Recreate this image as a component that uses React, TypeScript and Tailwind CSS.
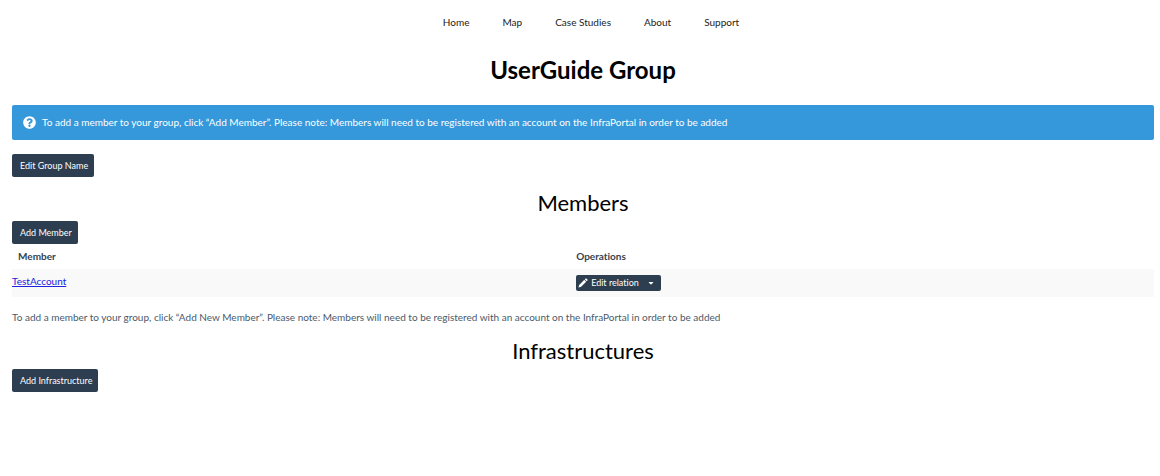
import type { ReactNode } from "react";
import { FaQuestionCircle, FaCaretDown } from "react-icons/fa";

const links = ["Home", "Map", "Case Studies", "About", "Support"];

function ActionButton({ children }: { children: ReactNode }) {
  return (
    <button type="button" className="block h-[23px] rounded-xs bg-[#2c3e50] pr-[6px] pl-2 text-[9px] leading-4 text-white">
      {children}
    </button>
  );
}

function PencilIcon() {
  return (
    <svg viewBox="0 0 10 10" className="size-[10px]" fill="currentColor" aria-hidden="true">
      <path d="M0.4 9.6 L1.2 6.9 L6.3 1.8 L8.2 3.7 L3.1 8.8 Z M6.8 1.3 L7.7 0.4 Q8 0.1 8.3 0.4 L9.6 1.7 Q9.9 2 9.6 2.3 L8.7 3.2 Z" />
    </svg>
  );
}

export default function App() {
  return (
    <div className="bg-white font-['Lato',sans-serif] text-[10px] text-[#4a5a6a] [font-variant-ligatures:none]">
      <nav className="flex justify-center gap-[33px] pt-3 pl-[22px] leading-5 text-[#222]">
        {links.map((l) => (
          <a key={l} href="#">{l}</a>
        ))}
      </nav>
      <main className="pr-[6px] pl-3">
        <h1 className="mt-5 text-center text-[24px] leading-9 font-bold text-black">UserGuide Group</h1>
        <div className="mt-[17px] flex min-h-[35px] items-center gap-[6px] rounded-xs bg-[#3498db] px-[11px] text-white">
          <FaQuestionCircle size={13} />
          <p>To add a member to your group, click “Add Member”. Please note: Members will need to be registered with an account on the InfraPortal in order to be added</p>
        </div>
        <div className="mt-[14px]">
          <ActionButton>Edit Group Name</ActionButton>
        </div>
        <h2 className="mt-2 text-center text-[22px] leading-9 text-black">Members</h2>
        <ActionButton>Add Member</ActionButton>
        <table className="w-full table-fixed text-left">
          <thead>
            <tr className="h-[25px] text-[#34434f]">
              <th className="w-[49.4%] px-[6px] font-bold">Member</th>
              <th className="px-0 font-bold">Operations</th>
            </tr>
          </thead>
          <tbody>
            <tr className="h-[28px] bg-[#f9f9f9]">
              <td className="pb-[3px]"><a href="#" className="text-[#2222dd] underline">TestAccount</a></td>
              <td>
                <div className="flex h-4 w-[85px] items-center rounded-xs bg-[#2c3e50] text-[9px] text-white">
                  <button type="button" className="flex items-center gap-[3px] pl-[2px]"><PencilIcon />Edit relation</button>
                  <button type="button" aria-label="More operations" className="ml-auto px-[6px]"><FaCaretDown size={8} /></button>
                </div>
              </td>
            </tr>
          </tbody>
        </table>
        <p className="mt-3 leading-4">To add a member to your group, click “Add New Member”. Please note: Members will need to be registered with an account on the InfraPortal in order to be added</p>
        <h2 className="mt-2 text-center text-[22px] leading-9 text-black">Infrastructures</h2>
        <ActionButton>Add Infrastructure</ActionButton>
      </main>
    </div>
  );
}
